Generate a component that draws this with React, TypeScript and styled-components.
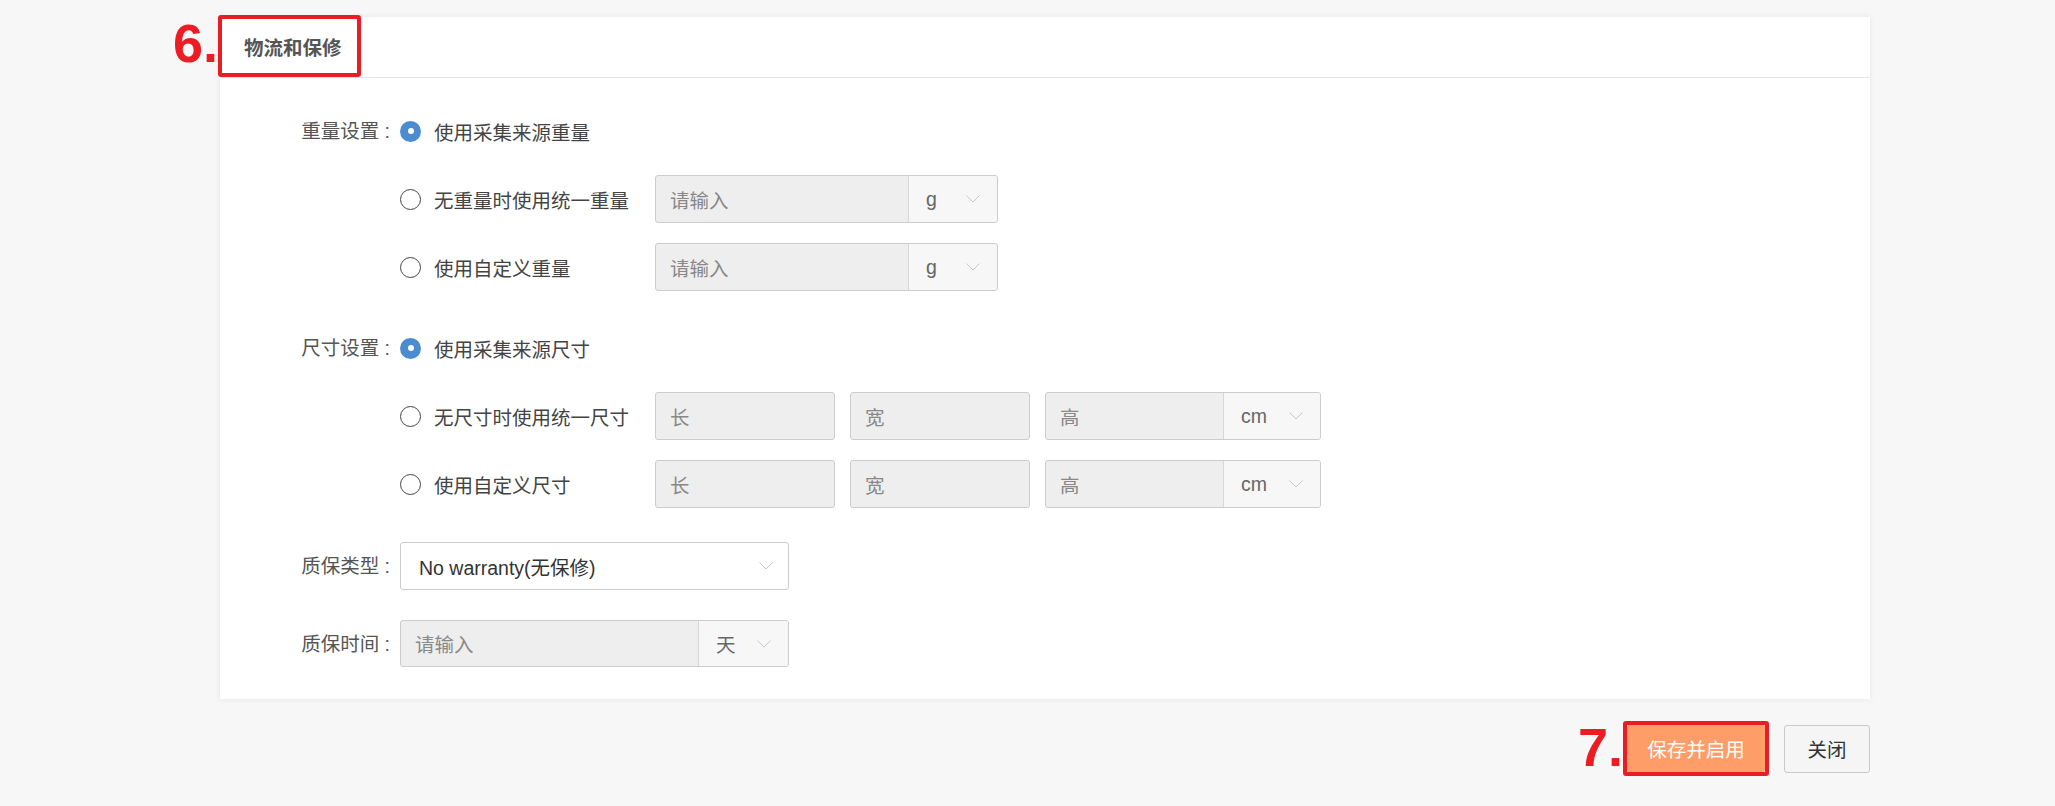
import React from "react";
import styled, { createGlobalStyle } from "styled-components";

const GlobalStyle = createGlobalStyle`
  html, body {
    margin: 0;
    padding: 0;
    background: #f7f7f7;
  }
  body {
    font-family: "Liberation Sans", "Noto Sans CJK SC", sans-serif;
    font-size: 19.5px;
    color: #333;
  }
  * {
    box-sizing: border-box;
  }
`;

const Page = styled.div`
  min-height: 806px;
  padding: 17px 185px 0 220px;
`;

const Card = styled.section`
  position: relative;
  background: #fff;
  box-shadow: 0 0 6px rgba(0, 0, 0, 0.08);
`;

const StepNo = styled.span`
  font-family: "Liberation Sans", Arial, sans-serif;
  font-size: 54px;
  font-weight: 700;
  line-height: 1;
  color: #ec1c24;
`;

const CardStep = styled(StepNo)`
  position: absolute;
  left: -47px;
  top: -1px;
`;

const Marked = styled.div`
  border: 4px solid #ec1c24;
  border-radius: 3px;
`;

const CardHeader = styled.div`
  height: 61px;
  display: flex;
  align-items: stretch;
  border-bottom: 1px solid #e6e6e6;
`;

const HeaderTitle = styled(Marked)`
  margin: -2px 0 0 -2px;
  padding: 0 15px 0 22px;
  display: flex;
  align-items: center;
  font-size: 19.5px;
  font-weight: 700;
  color: #555;
`;

const CardBody = styled.div`
  padding: 29px 0 31px;
`;

const FormItem = styled.div<{ $top?: number }>`
  display: flex;
  align-items: flex-start;
  margin-top: ${(p) => p.$top ?? 0}px;
`;

const ItemLabel = styled.div`
  width: 170px;
  margin-right: 10px;
  height: 48px;
  line-height: 48px;
  text-align: right;
  color: #555;
  white-space: pre;
`;

const Controls = styled.div`
  display: flex;
  flex-direction: column;
  gap: 20px;
`;

const OptionRow = styled.div`
  display: flex;
  align-items: center;
  gap: 15px;
  height: 48px;
`;

const Radio = styled.label`
  width: 240px;
  display: flex;
  align-items: center;
  gap: 13px;
  color: #444;
  white-space: nowrap;
`;

const RadioDot = styled.span<{ $checked?: boolean }>`
  width: 21px;
  height: 21px;
  border-radius: 50%;
  flex: none;
  display: flex;
  align-items: center;
  justify-content: center;
  border: ${(p) => (p.$checked ? "none" : "1.5px solid #444")};
  background: ${(p) => (p.$checked ? "#4a8ccf" : "#fff")};

  &::after {
    content: "";
    display: ${(p) => (p.$checked ? "block" : "none")};
    width: 6px;
    height: 6px;
    border-radius: 50%;
    background: #fff;
  }
`;

const Field = styled.div<{ $w: number; $h?: number }>`
  width: ${(p) => p.$w}px;
  height: ${(p) => p.$h ?? 48}px;
  display: flex;
  border: 1px solid #ccc;
  border-radius: 3px;
  background: #eee;
  overflow: hidden;
`;

const FieldText = styled.span`
  flex: 1;
  display: flex;
  align-items: center;
  padding-left: 14px;
  color: #888;
`;

const Addon = styled.div<{ $w: number }>`
  width: ${(p) => p.$w}px;
  flex: none;
  display: flex;
  align-items: center;
  justify-content: space-between;
  padding: 0 17px;
  border-left: 1px solid #d6d6d6;
  background: #f7f7f7;
  color: #666;
`;

const Select = styled.div`
  width: 389px;
  height: 48px;
  display: flex;
  align-items: center;
  justify-content: space-between;
  padding: 0 15px 0 18px;
  border: 1px solid #ccc;
  border-radius: 3px;
  background: #fff;
  color: #333;
`;

const ButtonRow = styled.div`
  display: flex;
  justify-content: flex-end;
  align-items: center;
  margin-top: 21px;
`;

const FooterStep = styled(StepNo)`
  margin: 0 0 3px 0;
`;

const Button = styled.button<{ $primary?: boolean }>`
  height: ${(p) => (p.$primary ? 47 : 48)}px;
  width: ${(p) => (p.$primary ? 138 : 86)}px;
  display: flex;
  align-items: center;
  justify-content: center;
  font-family: inherit;
  font-size: 19.5px;
  border-radius: 2px;
  border: ${(p) => (p.$primary ? "none" : "1px solid #c9c9c9")};
  background: ${(p) => (p.$primary ? "#ff9d68" : "#f5f5f5")};
  color: ${(p) => (p.$primary ? "#fff" : "#333")};
  padding: 0;
`;

const CloseButton = styled(Button)`
  margin-left: 15px;
  border-radius: 3px;
`;

const Chevron = () => (
  <svg width="14" height="8" viewBox="0 0 14 8" fill="none">
    <polyline points="0.5,0.5 7,7 13.5,0.5" stroke="#c8c8c8" strokeWidth="1" />
  </svg>
);

const UnitField = ({ w, addonW, text, unit, h }: { w: number; addonW: number; text: string; unit: string; h?: number }) => (
  <Field $w={w} $h={h}>
    <FieldText>{text}</FieldText>
    <Addon $w={addonW}>
      <span>{unit}</span>
      <Chevron />
    </Addon>
  </Field>
);

const SizeFields = () => (
  <>
    <Field $w={180}>
      <FieldText>长</FieldText>
    </Field>
    <Field $w={180}>
      <FieldText>宽</FieldText>
    </Field>
    <UnitField w={276} addonW={97} text="高" unit="cm" />
  </>
);

export default function App() {
  return (
    <>
      <GlobalStyle />
      <Page>
        <Card>
          <CardStep>6.</CardStep>
          <CardHeader>
            <HeaderTitle>物流和保修</HeaderTitle>
          </CardHeader>
          <CardBody>
            <FormItem>
              <ItemLabel>重量设置 :</ItemLabel>
              <Controls>
                <OptionRow>
                  <Radio>
                    <RadioDot $checked />
                    使用采集来源重量
                  </Radio>
                </OptionRow>
                <OptionRow>
                  <Radio>
                    <RadioDot />
                    无重量时使用统一重量
                  </Radio>
                  <UnitField w={343} addonW={89} text="请输入" unit="g" />
                </OptionRow>
                <OptionRow>
                  <Radio>
                    <RadioDot />
                    使用自定义重量
                  </Radio>
                  <UnitField w={343} addonW={89} text="请输入" unit="g" />
                </OptionRow>
              </Controls>
            </FormItem>

            <FormItem $top={33}>
              <ItemLabel>尺寸设置 :</ItemLabel>
              <Controls>
                <OptionRow>
                  <Radio>
                    <RadioDot $checked />
                    使用采集来源尺寸
                  </Radio>
                </OptionRow>
                <OptionRow>
                  <Radio>
                    <RadioDot />
                    无尺寸时使用统一尺寸
                  </Radio>
                  <SizeFields />
                </OptionRow>
                <OptionRow>
                  <Radio>
                    <RadioDot />
                    使用自定义尺寸
                  </Radio>
                  <SizeFields />
                </OptionRow>
              </Controls>
            </FormItem>

            <FormItem $top={34}>
              <ItemLabel>质保类型 :</ItemLabel>
              <Select>
                <span>No warranty(无保修)</span>
                <Chevron />
              </Select>
            </FormItem>

            <FormItem $top={30}>
              <ItemLabel>质保时间 :</ItemLabel>
              <UnitField w={389} addonW={90} h={47} text="请输入" unit="天" />
            </FormItem>
          </CardBody>
        </Card>

        <ButtonRow>
          <FooterStep>7.</FooterStep>
          <Marked>
            <Button $primary>保存并启用</Button>
          </Marked>
          <CloseButton>关闭</CloseButton>
        </ButtonRow>
      </Page>
    </>
  );
}
